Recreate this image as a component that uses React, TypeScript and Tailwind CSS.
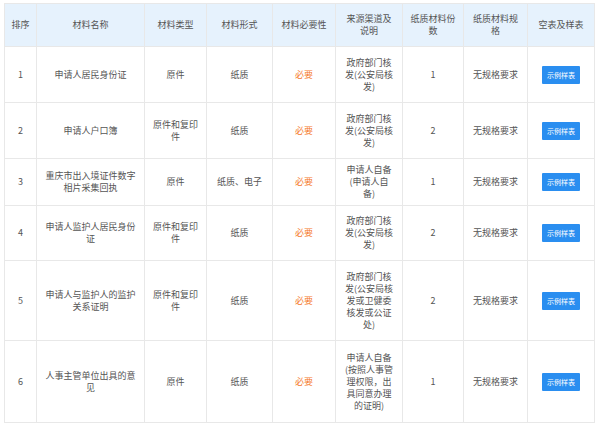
const cols = [32, 108, 62, 66, 63, 67, 61, 64, 67];
const heads = ["排序","材料名称","材料类型","材料形式","材料必要性","来源渠道及说明","纸质材料份数","纸质材料规格","空表及样表"];
const rows: [string,string,string,string,string,string,number][] = [
  ["1","申请人居民身份证","原件","纸质","政府部门核发(公安局核发)","1",56],
  ["2","申请人户口簿","原件和复印件","纸质","政府部门核发(公安局核发)","2",56],
  ["3","重庆市出入境证件数字相片采集回执","原件","纸质、电子","申请人自备(申请人自备)","1",47],
  ["4","申请人监护人居民身份证","原件和复印件","纸质","政府部门核发(公安局核发)","2",55],
  ["5","申请人与监护人的监护关系证明","原件和复印件","纸质","政府部门核发(公安局核发或卫健委核发或公证处)","2",80],
  ["6","人事主管单位出具的意见","原件","纸质","申请人自备(按照人事管理权限，出具同意办理的证明)","1",82],
];
export default function App() {
  const cell = "border border-[#e8e8e8] text-center align-middle";
  return (
    <div className="w-[600px] h-[424px] bg-white pt-[3px] pl-[4px]" style={{fontFamily:'"Noto Sans CJK SC", sans-serif'}}>
      <table className="border-collapse table-fixed text-[9px] leading-[12px] text-[#555]" style={{width: 590}}>
        <colgroup>{cols.map((w,i)=><col key={i} style={{width:w}}/>)}</colgroup>
        <thead>
          <tr className="bg-[#e6f2fd] h-[43px]">
            {heads.map((h,i)=><th key={i} className={`${cell} font-normal ${i>=5?"px-[7px]":"px-1"}`}>{h}</th>)}
          </tr>
        </thead>
        <tbody>
          {rows.map((r,i)=>(
            <tr key={i} style={{height:r[6]}}>
              <td className={cell}>{r[0]}</td>
              <td className={`${cell} px-[8px]`}>{r[1]}</td>
              <td className={`${cell} px-[6px]`}>{r[2]}</td>
              <td className={cell}>{r[3]}</td>
              <td className={`${cell} text-[#f5792a]`}>必要</td>
              <td className={`${cell} px-[8px]`}>{r[4]}</td>
              <td className={cell}>{r[5]}</td>
              <td className={cell}>无规格要求</td>
              <td className={cell}>
                <span className="inline-block bg-[#2a8ef0] text-white text-[7px] leading-[18px] w-[38px] rounded-[1px]">示例样表</span>
              </td>
            </tr>
          ))}
        </tbody>
      </table>
    </div>
  );
}
